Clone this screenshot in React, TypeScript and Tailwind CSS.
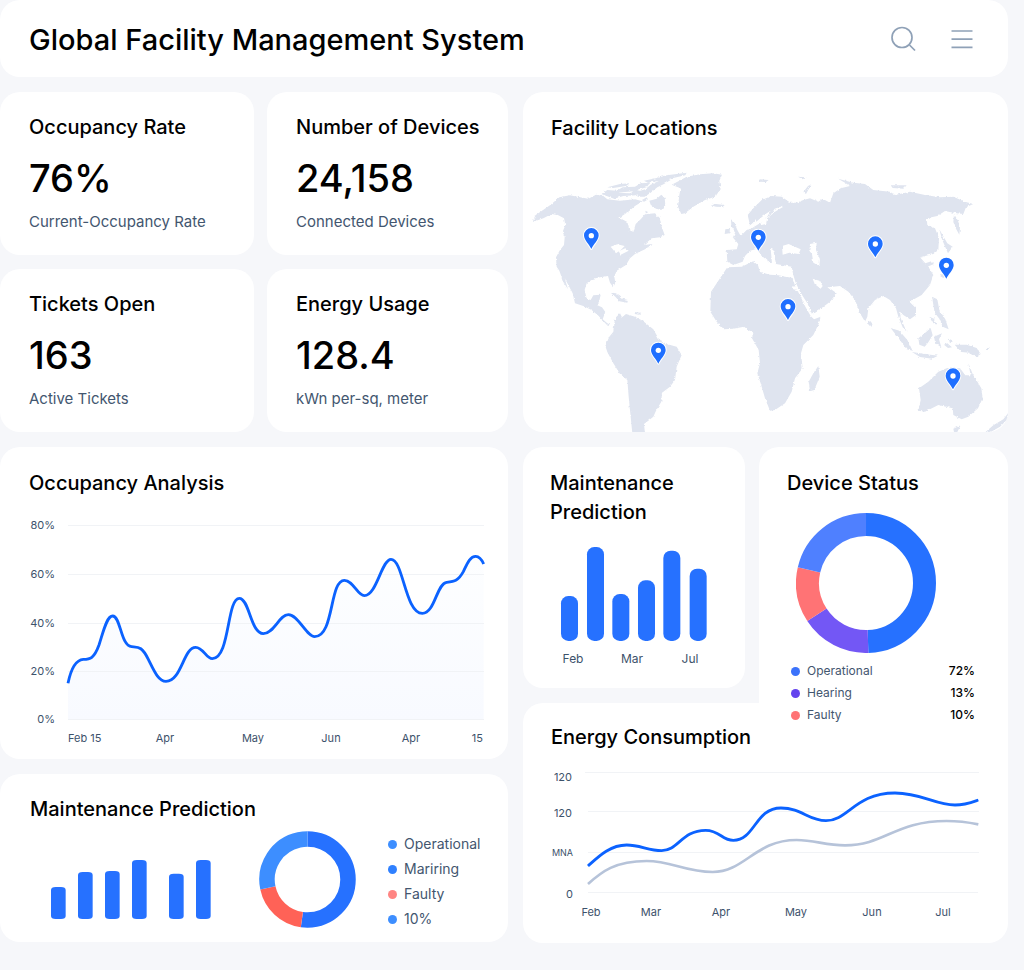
import type { ReactNode } from "react";

type Segment = { from: number; to: number; color: string };

const heading = "text-[20px] leading-[29px] font-medium text-black";

function Card({ className = "", children }: { className?: string; children: ReactNode }) {
  return <section className={`rounded-[20px] bg-white ${className}`}>{children}</section>;
}

const stats = [
  { title: "Occupancy Rate", value: "76%", note: "Current-Occupancy Rate" },
  { title: "Number of Devices", value: "24,158", note: "Connected Devices" },
  { title: "Tickets Open", value: "163", note: "Active Tickets" },
  { title: "Energy Usage", value: "128.4", note: "kWn per-sq, meter" },
];

function Header() {
  return (
    <header className="flex h-[77px] items-center justify-between rounded-[20px] bg-white pr-[34px] pl-[29px]">
      <h1 className="pt-[3px] text-[29px] leading-[36px] font-medium text-black">Global Facility Management System</h1>
      <div className="flex items-center gap-[33px] text-[#8fa1b7]">
        <button type="button" aria-label="Search" className="size-7">
          <svg viewBox="0 0 28 28" className="size-7" fill="none" stroke="currentColor" strokeWidth="1.7">
            <circle cx="13" cy="12.500" r="10" />
            <path d="M20.500 20l5.500 5.500" />
          </svg>
        </button>
        <button type="button" aria-label="Menu" className="size-6">
          <svg viewBox="0 0 24 24" className="size-6" fill="none" stroke="currentColor" strokeWidth="1.7">
            <path d="M1.500 4h21M1.500 12.200h21M1.500 20.300h21" />
          </svg>
        </button>
      </div>
    </header>
  );
}

const pins = [
  [214, 257],
  [715, 262],
  [415, 601],
  [804, 470],
  [1066, 282],
  [1279, 346],
  [1299, 678],
];

function WorldMap() {
  return (
    <svg viewBox="9 0 1455 846" className="block w-full" role="img" aria-label="World map with facility pins">
      <defs>
        <filter id="coast" x="-2%" y="-2%" width="104%" height="104%">
          <feTurbulence type="fractalNoise" baseFrequency="0.12" numOctaves="3" seed="4" />
          <feDisplacementMap in="SourceGraphic" scale="8" xChannelSelector="R" yChannelSelector="G" />
        </filter>
      </defs>
      <g filter="url(#coast)">
        <g fill="#dfe4ef">
          <path d="M38 216L46 196L66 182L92 164L118 142L150 136L180 142L205 146L228 134L250 138L262 148L300 152L345 148L368 154L345 168L325 185L298 203L322 216L328 240L340 246L347 222L362 208L375 193L405 190L420 205L425 230L434 255L420 262L395 265L372 285L398 282L375 298L345 312L330 325L318 345L290 362L283 380L286 398L280 412L270 398L264 378L240 382L220 386L200 400L194 420L200 446L212 450L220 436L242 434L238 452L232 466L246 472L256 486L248 508L262 520L272 524L264 528L250 514L236 498L215 480L190 468L165 460L158 430L145 405L134 385L144 418L130 396L118 362L110 350L108 322L120 300L132 285L134 262L128 245L136 225L132 205L115 196L95 192L70 205Z" />
          <path d="M455 104L478 92L500 80L540 73L580 70L606 74L598 92L602 118L585 140L555 150L520 170L495 190L484 192L474 170L478 135L482 115L464 108Z" />
          <path d="M244 132L262 120L290 122L308 112L345 110L362 100L390 98L380 112L350 120L372 126L346 136L310 138L282 146ZM356 124L376 118L392 104L418 92L440 84L452 90L432 102L412 112L392 128L374 140L352 140ZM372 92L410 84L440 76L500 68L496 76L460 84L420 92L384 98ZM262 112L300 102L330 100L318 108L280 114ZM388 152L410 146L424 134L434 144L436 166L424 180L408 176L392 164Z" />
          <path d="M366 150L380 142L384 148L372 156ZM376 182L384 186L378 192ZM572 166L588 162L614 165L608 171L588 170Z" />
          <path d="M272 428L288 430L308 446L324 450L322 458L298 454L286 440ZM346 486L364 488L358 494L344 492Z" />
          <path d="M285 505L300 490L306 502L318 492L345 500L368 512L400 538L418 570L440 582L470 590L485 615L470 650L465 690L450 710L426 728L424 755L408 782L400 800L385 812L372 822L376 860L338 860L332 800L326 740L322 690L300 672L280 640L262 606L256 588L268 560L280 545Z" />
          <path d="M622 352L665 350L700 334L714 346L720 366L750 374L775 376L818 384L826 410L840 436L856 470L872 498L882 508L902 500L896 522L880 555L850 585L843 610L848 655L825 685L815 725L795 760L765 780L750 782L735 745L722 700L712 670L720 640L716 600L696 565L700 550L672 530L640 536L612 538L590 515L571 485L573 425L600 385Z" />
          <path d="M895 648L899 680L883 720L870 724L866 695L880 670Z" />
          <path d="M620 300L650 298L655 282L640 264L665 255L680 240L700 232L710 212L722 226L738 222L742 205L765 185L790 170L808 158L830 158L850 150L870 145L895 155L908 146L930 158L940 130L962 115L990 108L975 98L954 86L1000 98L1035 102L1060 120L1110 125L1125 135L1170 125L1215 135L1260 142L1300 140L1335 155L1360 162L1338 172L1330 192L1300 188L1275 183L1252 198L1220 205L1222 225L1245 235L1257 265L1255 300L1240 312L1215 318L1200 322L1198 332L1220 330L1225 350L1240 375L1230 405L1205 435L1178 450L1165 452L1188 475L1188 495L1170 508L1150 495L1140 485L1142 505L1160 545L1148 532L1135 500L1128 475L1110 450L1090 438L1065 450L1045 475L1042 500L1035 515L1020 490L1005 450L985 425L960 408L925 412L950 430L930 455L900 478L876 492L862 460L840 425L826 395L820 375L815 350L790 346L768 342L760 300L752 296L756 340L740 330L722 315L712 296L690 302L675 318L668 335L640 345L622 335Z" />
          <path d="M690 226L683 195L700 175L725 150L755 138L785 140L808 156L800 172L782 170L764 176L752 195L732 208L718 224L706 208L698 220Z" />
          <path d="M633 208L642 216L652 240L662 258L638 264L646 246L634 228ZM616 238L630 236L628 250L614 252ZM718 88L746 90L738 96L722 95ZM850 126L864 108L876 102L868 114L858 132ZM834 80L860 82L848 88ZM1112 106L1160 106L1150 116L1118 114Z" />
          <path d="M1302 192L1314 212L1320 232L1318 254L1308 236L1300 216ZM1258 238L1268 256L1282 280L1298 290L1284 310L1276 292L1266 268ZM1190 320L1226 326L1242 342L1218 352L1202 340ZM1286 366L1270 384L1260 378L1276 360Z" />
          <path d="M1050 512L1058 522L1052 530L1044 522ZM1236 440L1252 448L1258 480L1276 508L1286 538L1268 530L1258 506L1244 488ZM1228 500L1242 506L1250 524L1238 518ZM1195 565L1214 550L1232 534L1238 556L1224 578L1214 590L1198 584ZM1112 534L1138 542L1162 570L1178 602L1160 598L1138 568ZM1176 606L1210 611L1254 617L1236 626L1200 621ZM1242 560L1266 550L1257 568L1264 592L1246 580ZM1272 584L1282 580L1296 592L1284 594ZM1304 584L1340 584L1370 594L1382 612L1370 620L1348 608L1324 606ZM1286 566L1300 572L1290 580ZM1394 600L1410 592L1406 600Z" />
          <path d="M1197 715L1225 695L1255 665L1280 655L1320 655L1336 676L1352 676L1345 640L1358 672L1384 715L1388 745L1374 775L1345 800L1325 808L1300 795L1298 775L1255 765L1215 785L1195 782L1202 750ZM1300 836L1322 826L1312 846L1302 846ZM1394 848L1420 826L1450 808L1464 790L1464 806L1440 830L1412 846Z" />
        </g>
        <g fill="#ffffff">
          <path d="M272 290L292 283L314 288L302 300L288 310L280 300ZM296 304L316 295L326 302L302 314Z" />
          <path d="M786 288L806 282L842 298L836 312L808 308L788 314ZM870 282L890 278L888 300L900 328L898 348L880 338L876 312L868 302ZM878 386L898 392L908 408L902 416L884 402ZM816 408L828 410L836 424L826 422Z" />
          <path d="M684 240L698 220L708 216L722 204L740 190L752 182L736 210L716 222L700 232ZM292 128L340 124L330 130ZM1202 324L1238 316L1234 334L1216 340Z" />
        </g>
      </g>
      {pins.map(([x, y]) => (
        <g key={`${x}-${y}`} transform={`translate(${x} ${y})`}>
          <path
            d="M0 40C-6 26-22 14-22-1A22 22 0 0 1 22-1C22 14 6 26 0 40Z"
            fill="#1f6fff"
            stroke="#ffffff"
            strokeWidth="6"
            paintOrder="stroke"
            strokeLinejoin="round"
          />
          <circle r="8" fill="#ffffff" />
        </g>
      ))}
    </svg>
  );
}

function Donut({ segments, radius, width, size, className }: { segments: Segment[]; radius: number; width: number; size: number; className: string }) {
  const c = size / 2;
  return (
    <svg viewBox={`0 0 ${size} ${size}`} className={className} fill="none" strokeWidth={width} role="img" aria-label="Status breakdown">
      {segments.map((s) => (
        <circle
          key={s.from}
          cx={c}
          cy={c}
          r={radius}
          pathLength={360}
          stroke={s.color}
          strokeDasharray={`${s.to - s.from} 360`}
          transform={`rotate(${s.from - 90} ${c} ${c})`}
        />
      ))}
    </svg>
  );
}

function OccupancyChart() {
  const line =
    "M204 730C212 690 225 660 250 658C270 658 282 656 297 615C310 575 320 528 338 528C362 528 362 618 395 620C415 622 425 618 445 658C462 692 475 724 498 724C545 724 550 622 587 622C610 622 618 656 637 656C690 656 680 475 718 475C748 475 752 581 790 581C822 581 838 524 865 524C895 524 920 590 944 590C1003 590 988 421 1033 421C1060 421 1072 467 1093 467C1130 467 1145 358 1173 358C1210 358 1215 520 1267 520C1305 520 1310 430 1340 427C1365 424 1375 422 1390 395C1402 370 1410 349 1427 349C1438 349 1445 358 1451 372";
  const rows = [
    { y: 525, label: "80%" },
    { y: 574, label: "60%" },
    { y: 623, label: "40%" },
    { y: 671, label: "20%" },
    { y: 719, label: "0%" },
  ];
  return (
    <svg viewBox="0 498 508 261" className="block w-full" role="img" aria-label="Occupancy over time">
      <defs>
        <linearGradient id="occupancyFill" x1="0" y1="0" x2="0" y2="1">
          <stop offset="0" stopColor="#fdfeff" />
          <stop offset="1" stopColor="#f8faff" />
        </linearGradient>
      </defs>
      <g transform="translate(0 440) scale(0.33333)">
        <path d={`${line}V837H204Z`} fill="url(#occupancyFill)" />
      </g>
      <g stroke="#f1f3f6">
        {rows.map((r) => (
          <path key={r.y} d={`M68 ${r.y}.5H484`} />
        ))}
      </g>
      <g transform="translate(0 440) scale(0.33333)">
        <path d={line} fill="none" stroke="#0b62ff" strokeWidth="8.500" />
      </g>
      <g className="fill-[#3d526b] text-[11px]">
        <g textAnchor="end">
          {rows.map((r) => (
            <text key={r.y} x="55" y={r.y + 4}>
              {r.label}
            </text>
          ))}
          <text x="483" y="742">15</text>
        </g>
        <text x="68" y="742">Feb 15</text>
        <g textAnchor="middle">
          <text x="165" y="742">Apr</text>
          <text x="253" y="742">May</text>
          <text x="331" y="742">Jun</text>
          <text x="411" y="742">Apr</text>
        </g>
      </g>
    </svg>
  );
}

function MonthlyBars() {
  const bars = [
    [138, 468],
    [216, 321],
    [292, 462],
    [369, 421],
    [445, 332],
    [524, 386],
  ];
  return (
    <svg viewBox="523 527 222 161" className="block w-full" role="img" aria-label="Maintenance by month">
      <g transform="translate(515 440) scale(0.33333)" fill="#2671ff">
        {bars.map(([x, top]) => (
          <rect key={x} x={x} y={top} width="51" height={603 - top} rx="22" />
        ))}
      </g>
      <g className="fill-[#3d526b] text-[12px]" textAnchor="middle">
        <text x="573" y="663">Feb</text>
        <text x="632" y="663">Mar</text>
        <text x="690" y="663">Jul</text>
      </g>
    </svg>
  );
}

function ForecastBars() {
  const bars = [
    [0, 81],
    [81, 36],
    [162, 33],
    [243, 0],
    [354, 41],
    [435, 0],
  ];
  return (
    <svg viewBox="0 0 480 177" className="mt-[29px] h-[59px] w-[160px]" role="img" aria-label="Maintenance forecast" fill="#2671ff">
      {bars.map(([x, top]) => (
        <rect key={x} x={x} y={top} width="44" height={177 - top} rx="14" ry="9" />
      ))}
    </svg>
  );
}

function EnergyChart() {
  return (
    <svg viewBox="523 760 485 183" className="block w-full" role="img" aria-label="Energy consumption over time">
      <path d="M585 772.500H979M588 811.500H979M588 852.500H979M588 892.500H978" stroke="#f1f3f6" />
      <g transform="translate(515 695) scale(0.33333)" fill="none">
        <path
          d="M219 567C260 530 300 498 395 498C470 498 510 531 593 531C690 531 720 435 845 435C900 435 930 451 990 451C1110 451 1140 378 1295 378C1330 378 1360 382 1390 388"
          stroke="#b6c3d9"
          strokeWidth="8"
        />
        <path
          d="M219 513C250 485 285 450 335 450C375 450 400 467 440 467C490 467 500 406 572 406C615 406 620 436 655 436C720 436 720 339 798 339C860 339 880 377 933 377C1000 377 1020 294 1140 294C1220 294 1260 330 1320 330C1350 330 1370 322 1390 315"
          stroke="#0b62ff"
          strokeWidth="8.500"
        />
      </g>
      <g className="fill-[#3d526b] text-[11px]">
        <g textAnchor="end">
          <text x="572" y="781">120</text>
          <text x="572" y="817">120</text>
          <text x="573" y="856" className="text-[9px]">MNA</text>
          <text x="573" y="898">0</text>
        </g>
        <g textAnchor="middle">
          <text x="591" y="916">Feb</text>
          <text x="651" y="916">Mar</text>
          <text x="721" y="916">Apr</text>
          <text x="796" y="916">May</text>
          <text x="872" y="916">Jun</text>
          <text x="943" y="916">Jul</text>
        </g>
      </g>
    </svg>
  );
}

const deviceSegments: Segment[] = [
  { from: 0, to: 178, color: "#2671ff" },
  { from: 178, to: 237, color: "#7357f5" },
  { from: 237, to: 283, color: "#ff7375" },
  { from: 283, to: 360, color: "#4f80ff" },
];

const forecastSegments: Segment[] = [
  { from: 0, to: 188, color: "#2671ff" },
  { from: 188, to: 258, color: "#ff6257" },
  { from: 258, to: 360, color: "#3d8eff" },
];

const deviceLegend = [
  { label: "Operational", value: "72%", dot: "bg-[#3b72fb]" },
  { label: "Hearing", value: "13%", dot: "bg-[#6443ee]" },
  { label: "Faulty", value: "10%", dot: "bg-[#ff7375]" },
];

const forecastLegend = [
  { label: "Operational", dot: "bg-[#3d8eff]" },
  { label: "Mariring", dot: "bg-[#2f80ff]" },
  { label: "Faulty", dot: "bg-[#ff8583]" },
  { label: "10%", dot: "bg-[#3d8eff]" },
];

export default function App() {
  return (
    <div className="min-h-screen bg-[#f6f7fa] pr-4 pb-[27px] font-['Inter',sans-serif]">
      <Header />
      <main className="mt-[15px] grid grid-cols-[508fr_485fr] items-start gap-x-[15px]">
        <div className="flex min-w-0 flex-col gap-[15px]">
          <div className="grid grid-cols-[254fr_241fr] gap-x-[13px] gap-y-[14px]">
            {stats.map((s) => (
              <Card key={s.title} className="pt-[21px] pr-3 pb-[23px] pl-[29px]">
                <h2 className={heading}>{s.title}</h2>
                <p className="mt-[12px] text-[38px] leading-[48px] font-medium text-black">{s.value}</p>
                <p className="mt-[10px] text-[15px] leading-[20px] text-[#43566f]">{s.note}</p>
              </Card>
            ))}
          </div>
          <Card className="pt-[22px]">
            <h2 className={`${heading} pl-[29px]`}>Occupancy Analysis</h2>
            <OccupancyChart />
          </Card>
          <Card className="pt-[21px] pb-[11px]">
            <h2 className={`${heading} pl-[30px]`}>Maintenance Prediction</h2>
            <div className="mt-[7px] flex items-start pl-[51px]">
              <ForecastBars />
              <Donut segments={forecastSegments} radius={40.5} width={15.5} size={97} className="ml-12 size-[97px]" />
              <ul className="mt-px ml-[32px] flex flex-col gap-px text-[14px] leading-[24px] text-[#43566f]">
                {forecastLegend.map((l) => (
                  <li key={l.label} className="flex items-center gap-[7px]">
                    <span className={`size-[9px] rounded-full ${l.dot}`} />
                    {l.label}
                  </li>
                ))}
              </ul>
            </div>
          </Card>
        </div>

        <div className="flex min-w-0 flex-col gap-[15px]">
          <Card className="overflow-hidden pt-[22px]">
            <h2 className={`${heading} mb-[7px] pl-[28px]`}>Facility Locations</h2>
            <WorldMap />
          </Card>
          <div className="grid grid-cols-[222fr_249fr] grid-rows-[auto_auto] items-start gap-x-[14px] gap-y-[15px]">
            <Card className="col-start-1 row-start-1 pt-[22px]">
              <h2 className={`${heading} pr-10 pl-[27px]`}>Maintenance Prediction</h2>
              <MonthlyBars />
            </Card>
            <section className="z-10 col-start-2 row-span-2 row-start-1 rounded-t-[20px] bg-white pt-[22px] pr-[33px] pl-[28px]">
              <h2 className={heading}>Device Status</h2>
              <Donut segments={deviceSegments} radius={58.5} width={23} size={140} className="mt-[15px] ml-[9px] size-[140px]" />
              <ul className="mt-[7px] pl-1 text-[12px] leading-[22px] text-[#43566f]">
                {deviceLegend.map((l) => (
                  <li key={l.label} className="flex items-center gap-[7px]">
                    <span className={`size-[9px] rounded-full ${l.dot}`} />
                    <span className="grow">{l.label}</span>
                    <span className="font-medium text-black">{l.value}</span>
                  </li>
                ))}
              </ul>
            </section>
            <Card className="col-span-2 col-start-1 row-start-2 pt-[20px]">
              <h2 className={`${heading} mb-2 pl-[28px]`}>Energy Consumption</h2>
              <EnergyChart />
            </Card>
          </div>
        </div>
      </main>
    </div>
  );
}
